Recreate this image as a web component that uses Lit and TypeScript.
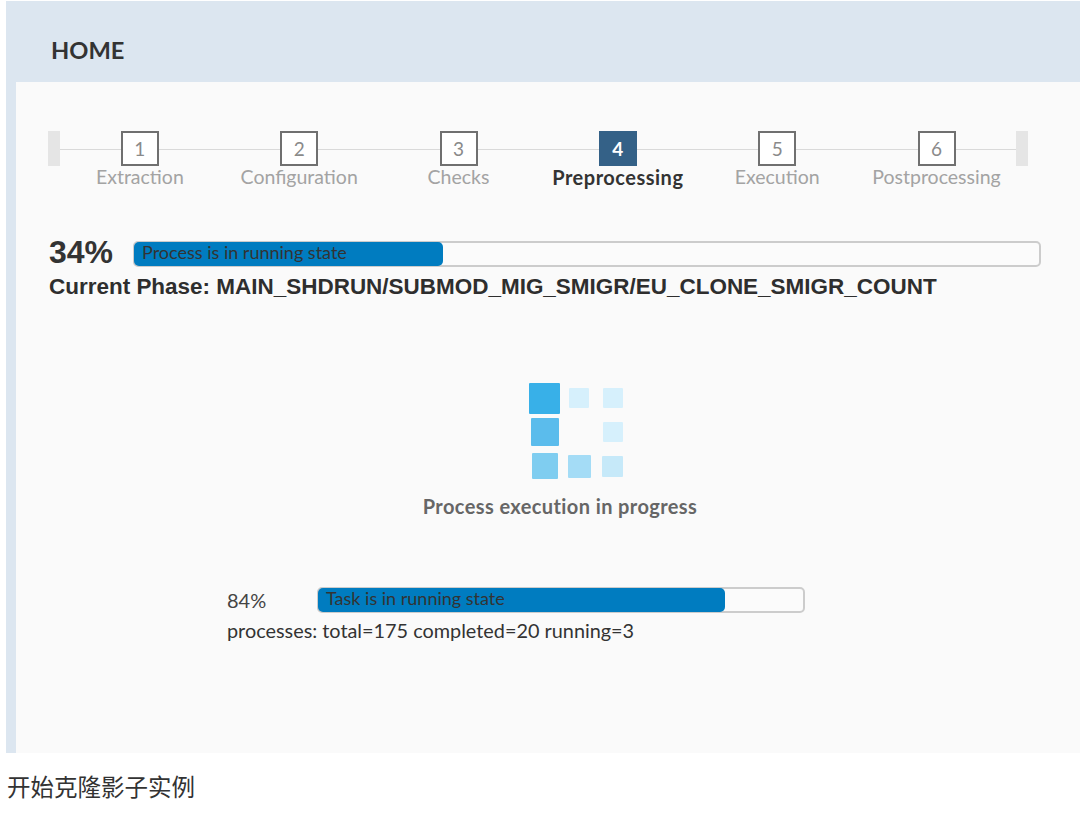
import { LitElement, html, css } from "lit";
import { customElement } from "lit/decorators.js";

const steps = ["Extraction", "Configuration", "Checks", "Preprocessing", "Execution", "Postprocessing"];
const squares = [
  { size: 31, color: "#38b0e8" }, { size: 20, color: "#d6f0fc" }, { size: 20, color: "#d6f0fc" },
  { size: 28, color: "#5bbcec" }, { size: 0, color: "transparent" }, { size: 20, color: "#d6f0fc" },
  { size: 26, color: "#7fcdf0" }, { size: 23, color: "#a4dcf6" }, { size: 21, color: "#c6e9f9" },
];

@customElement("app-root")
export class AppRoot extends LitElement {
  static styles = css`
    :host { display: block; height: 831px; background: #fff; font-family: Lato, sans-serif; color: #333; overflow: hidden; }
    .panel { margin: 1px 0 0 6px; height: 752px; background: #dce6f0; display: flex; flex-direction: column; }
    .title { height: 81px; flex: none; box-sizing: border-box; padding: 33px 0 0 45px; font: 700 23.7px/33px Lato, sans-serif; color: #333; }
    .content { flex: 1; margin-left: 10px; background: #fafafa; padding: 49px 39px 0 32px; display: flex; flex-direction: column; }
    .stepper { display: flex; position: relative; height: 72px; width: 980px; }
    .cap { width: 12px; height: 35px; background: #e5e5e5; flex: none; }
    .line { position: absolute; left: 12px; right: 12px; top: 18px; height: 1px; background: #d9d9d9; }
    .step { flex: 1; display: flex; flex-direction: column; align-items: center; position: relative; padding-left: 0.4px; }
    .box { width: 38px; height: 35px; box-sizing: border-box; border: 2px solid #707070; background: #fff; color: #8a8a8a; font-size: 19px; padding-bottom: 1px; display: flex; align-items: center; justify-content: center; }
    .label { font-size: 19.5px; line-height: 22px; color: #a3a3a3; white-space: nowrap; }
    .step.on .box { background: #346187; border-color: #346187; color: #fff; font-weight: 700; }
    .step.on .label { color: #333; font-weight: 700; font-size: 20px; letter-spacing: 0.5px; }
    .main { display: flex; align-items: center; margin-top: 38px; height: 26px; }
    .pct { width: 85px; flex: none; box-sizing: border-box; padding: 0 0 4px 1px; font: 700 32px/26px "Liberation Sans", sans-serif; color: #333; }
    .bar { flex: 1; height: 26px; box-sizing: border-box; border: 2px solid #ccc; border-radius: 5px; background: #fbfbfb; position: relative; }
    .fill { height: calc(100% - 2px); margin: -1px 0 0 -1px; padding-bottom: 4px; background: #007cc0; border-radius: 5px; display: flex; align-items: center; padding-left: 8px; box-sizing: content-box; font-size: 18px; color: #333; white-space: nowrap; }
    .phase { font: 700 22.47px/26px "Liberation Sans", sans-serif; color: #2e2e2e; margin: 7px 0 0 1px; white-space: nowrap; }
    .center { margin-left: 31px; display: flex; flex-direction: column; align-items: center; margin-top: 81px; }
    .spinner { display: grid; grid-template-columns: 35px 34px 33px; grid-template-rows: 34px 34px 34px; place-items: center; filter: blur(0.6px); margin-left: 36px; }
    .spinner div { border-radius: 1px; }
    .caption { font: 700 20px/24px Lato, sans-serif; color: #666; margin-top: 11px; letter-spacing: 0.4px; }
    .task { margin: 69px 0 0 179px; width: 578px; }
    .task-row { display: flex; align-items: center; height: 26px; }
    .task-pct { width: 90px; flex: none; font-size: 20px; color: #444; }
    .task-text { font-size: 19.85px; line-height: 26px; margin-top: 4px; color: #333; white-space: nowrap; }
    .caption-out { padding: 19px 0 0 7px; font: 400 23.5px/28px "Noto Sans CJK SC", sans-serif; color: #333; }
  `;

  render() {
    return html`
      <div class="panel">
        <div class="title">HOME</div>
        <div class="content">
          <div class="stepper">
            <div class="line"></div>
            <div class="cap"></div>
            ${steps.map((s, i) => html`
              <div class="step ${i === 3 ? "on" : ""}">
                <div class="box">${i + 1}</div>
                <div class="label">${s}</div>
              </div>`)}
            <div class="cap"></div>
          </div>
          <div class="main">
            <div class="pct">34%</div>
            <div class="bar"><div class="fill" style="width: 301px">Process is in running state</div></div>
          </div>
          <div class="phase">Current Phase: MAIN_SHDRUN/SUBMOD_MIG_SMIGR/EU_CLONE_SMIGR_COUNT</div>
          <div class="center">
            <div class="spinner">
              ${squares.map((q) => html`<div style="width:${q.size}px;height:${q.size}px;background:${q.color}"></div>`)}
            </div>
            <div class="caption">Process execution in progress</div>
          </div>
          <div class="task">
            <div class="task-row">
              <div class="task-pct">84%</div>
              <div class="bar"><div class="fill" style="width: 399px">Task is in running state</div></div>
            </div>
            <div class="task-text">processes: total=175 completed=20 running=3</div>
          </div>
        </div>
      </div>
      <div class="caption-out">开始克隆影子实例</div>
    `;
  }
}
